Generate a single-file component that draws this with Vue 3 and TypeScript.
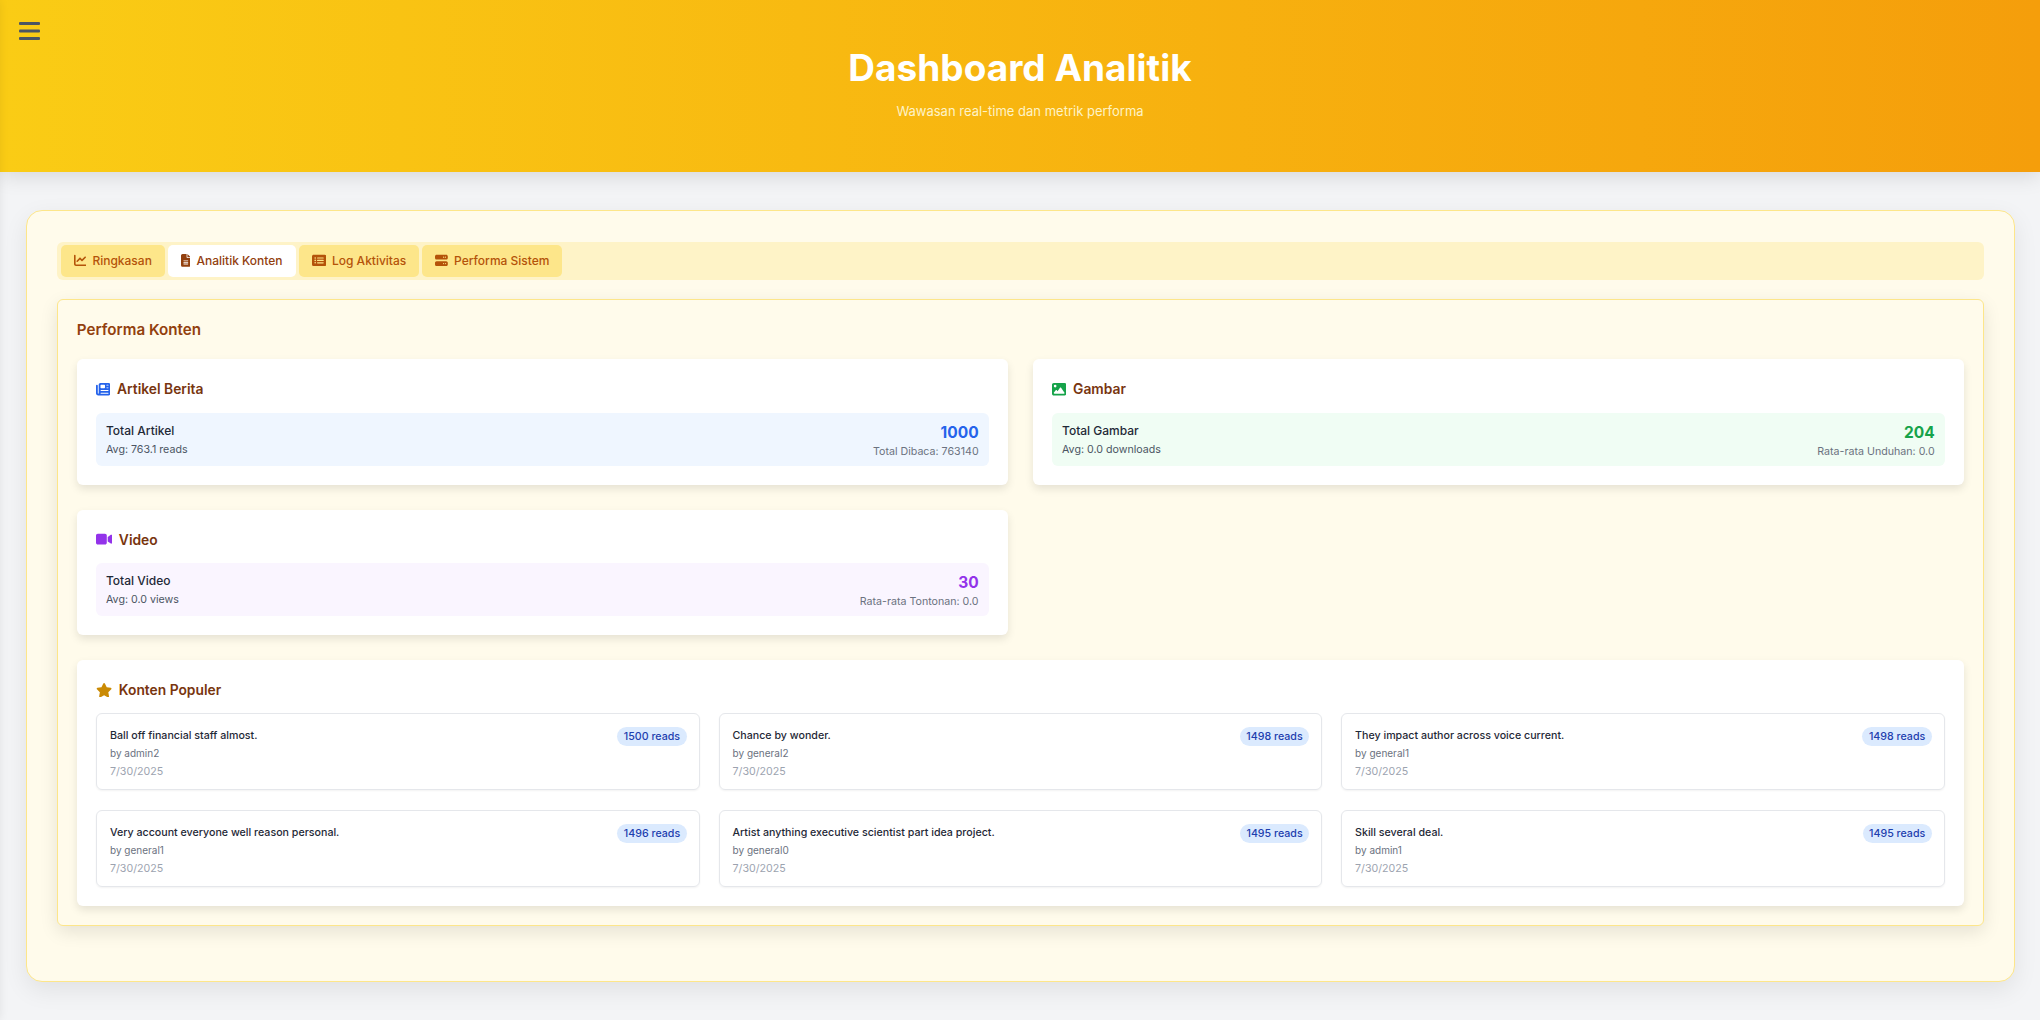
<script setup lang="ts">
interface Tab {
  label: string;
  icon: string;
  active?: boolean;
}

interface Stat {
  title: string;
  icon: string;
  tone: string;
  label: string;
  sub: string;
  value: number;
  note: string;
}

interface Popular {
  title: string;
  author: string;
  date: string;
  reads: number;
}

const tabs: Tab[] = [
  { label: "Ringkasan", icon: "chart" },
  { label: "Analitik Konten", icon: "file", active: true },
  { label: "Log Aktivitas", icon: "list" },
  { label: "Performa Sistem", icon: "server" },
];

const stats: Stat[] = [
  { title: "Artikel Berita", icon: "news", tone: "blue", label: "Total Artikel", sub: "Avg: 763.1 reads", value: 1000, note: "Total Dibaca: 763140" },
  { title: "Gambar", icon: "image", tone: "green", label: "Total Gambar", sub: "Avg: 0.0 downloads", value: 204, note: "Rata-rata Unduhan: 0.0" },
  { title: "Video", icon: "video", tone: "purple", label: "Total Video", sub: "Avg: 0.0 views", value: 30, note: "Rata-rata Tontonan: 0.0" },
];

const popular: Popular[] = [
  { title: "Ball off financial staff almost.", author: "admin2", date: "7/30/2025", reads: 1500 },
  { title: "Chance by wonder.", author: "general2", date: "7/30/2025", reads: 1498 },
  { title: "They impact author across voice current.", author: "general1", date: "7/30/2025", reads: 1498 },
  { title: "Very account everyone well reason personal.", author: "general1", date: "7/30/2025", reads: 1496 },
  { title: "Artist anything executive scientist part idea project.", author: "general0", date: "7/30/2025", reads: 1495 },
  { title: "Skill several deal.", author: "admin1", date: "7/30/2025", reads: 1495 },
];
</script>

<template>
  <div class="page">
    <div class="edge-shadow"></div>
    <header class="hero">
      <button class="menu" aria-label="Menu">
        <svg viewBox="0 0 21 18" width="21" height="18">
          <rect x="0" y="0" width="21" height="3" rx="1" />
          <rect x="0" y="7.5" width="21" height="3" rx="1" />
          <rect x="0" y="15" width="21" height="3" rx="1" />
        </svg>
      </button>
      <h1>Dashboard Analitik</h1>
      <p>Wawasan real-time dan metrik performa</p>
    </header>

    <main class="shell">
      <nav class="tabs">
        <button v-for="tab in tabs" :key="tab.label" class="tab" :class="{ active: tab.active }">
          <svg v-if="tab.icon === 'chart'" class="tab-icon" viewBox="0 0 512 512">
            <path d="M64 64c0-17.700-14.300-32-32-32S0 46.300 0 64V400c0 44.200 35.800 80 80 80H480c17.700 0 32-14.300 32-32s-14.300-32-32-32H80c-8.800 0-16-7.200-16-16V64zm406.600 86.600c12.500-12.500 12.500-32.800 0-45.300s-32.800-12.500-45.300 0L320 210.700l-57.400-57.400c-12.500-12.500-32.800-12.500-45.300 0l-112 112c-12.500 12.500-12.500 32.800 0 45.300s32.800 12.500 45.300 0L240 221.300l57.400 57.400c12.500 12.500 32.800 12.500 45.300 0l128-128z" />
          </svg>
          <svg v-else-if="tab.icon === 'file'" class="tab-icon" viewBox="0 0 384 512">
            <path d="M64 0C28.700 0 0 28.700 0 64V448c0 35.300 28.700 64 64 64H320c35.300 0 64-28.700 64-64V160H256c-17.700 0-32-14.300-32-32V0H64zM256 0V128H384L256 0zM112 256H272c8.800 0 16 7.200 16 16s-7.200 16-16 16H112c-8.800 0-16-7.200-16-16s7.200-16 16-16zm0 64H272c8.800 0 16 7.200 16 16s-7.200 16-16 16H112c-8.800 0-16-7.200-16-16s7.200-16 16-16zm0 64H272c8.800 0 16 7.200 16 16s-7.200 16-16 16H112c-8.800 0-16-7.200-16-16s7.200-16 16-16z" />
          </svg>
          <svg v-else-if="tab.icon === 'list'" class="tab-icon" viewBox="0 0 576 512">
            <path d="M0 96C0 60.700 28.700 32 64 32H512c35.300 0 64 28.700 64 64V416c0 35.300-28.700 64-64 64H64c-35.300 0-64-28.700-64-64V96zM128 288a32 32 0 1 0 0-64 32 32 0 1 0 0 64zm32-128a32 32 0 1 0 -64 0 32 32 0 1 0 64 0zM128 384a32 32 0 1 0 0-64 32 32 0 1 0 0 64zm96-248c-13.300 0-24 10.700-24 24s10.700 24 24 24H448c13.300 0 24-10.700 24-24s-10.700-24-24-24H224zm0 96c-13.300 0-24 10.700-24 24s10.700 24 24 24H448c13.300 0 24-10.700 24-24s-10.700-24-24-24H224zm0 96c-13.300 0-24 10.700-24 24s10.700 24 24 24H448c13.300 0 24-10.700 24-24s-10.700-24-24-24H224z" />
          </svg>
          <svg v-else class="tab-icon" viewBox="0 0 512 512">
            <path d="M64 32C28.700 32 0 60.700 0 96v64c0 35.300 28.700 64 64 64H448c35.300 0 64-28.700 64-64V96c0-35.300-28.700-64-64-64H64zm280 72a24 24 0 1 1 0 48 24 24 0 1 1 0-48zm48 24a24 24 0 1 1 48 0 24 24 0 1 1 -48 0zM64 288c-35.300 0-64 28.700-64 64v64c0 35.300 28.700 64 64 64H448c35.300 0 64-28.700 64-64V352c0-35.300-28.700-64-64-64H64zm280 72a24 24 0 1 1 0 48 24 24 0 1 1 0-48zm56 24a24 24 0 1 1 48 0 24 24 0 1 1 -48 0z" />
          </svg>
          {{ tab.label }}
        </button>
      </nav>

      <section class="panel">
        <h2>Performa Konten</h2>

        <div class="stat-grid">
          <article v-for="stat in stats" :key="stat.title" class="card">
            <h3>
              <svg v-if="stat.icon === 'news'" class="head-icon blue" viewBox="0 0 512 512">
                <path d="M96 96c0-35.300 28.700-64 64-64H448c35.300 0 64 28.700 64 64V416c0 35.300-28.700 64-64 64H80c-44.200 0-80-35.800-80-80V128c0-17.700 14.300-32 32-32s32 14.300 32 32V400c0 8.800 7.200 16 16 16s16-7.200 16-16V96zm64 24v80c0 13.300 10.700 24 24 24H296c13.300 0 24-10.700 24-24V120c0-13.300-10.700-24-24-24H184c-13.300 0-24 10.700-24 24zm208-8c0 8.800 7.200 16 16 16h48c8.800 0 16-7.200 16-16s-7.200-16-16-16H384c-8.800 0-16 7.200-16 16zm0 96c0 8.800 7.200 16 16 16h48c8.800 0 16-7.200 16-16s-7.200-16-16-16H384c-8.800 0-16 7.200-16 16zM160 304c0 8.800 7.200 16 16 16H432c8.800 0 16-7.200 16-16s-7.200-16-16-16H176c-8.800 0-16 7.200-16 16zm0 96c0 8.800 7.200 16 16 16H432c8.800 0 16-7.200 16-16s-7.200-16-16-16H176c-8.800 0-16 7.200-16 16z" />
              </svg>
              <svg v-else-if="stat.icon === 'image'" class="head-icon green" viewBox="0 0 512 512">
                <path d="M0 96C0 60.700 28.700 32 64 32H448c35.300 0 64 28.700 64 64V416c0 35.300-28.700 64-64 64H64c-35.300 0-64-28.700-64-64V96zM323.800 202.500c-4.500-6.600-11.900-10.500-19.800-10.500s-15.400 3.900-19.800 10.500l-87 127.600L170.700 297c-4.600-5.700-11.500-9-18.700-9s-14.200 3.300-18.700 9l-64 80c-5.800 7.200-6.900 17.100-2.900 25.400s12.400 13.600 21.600 13.600h96 32H424c8.900 0 17.100-4.900 21.200-12.800s3.600-17.400-1.400-24.700l-120-176zM112 192a48 48 0 1 0 0-96 48 48 0 1 0 0 96z" />
              </svg>
              <svg v-else class="head-icon purple" viewBox="0 0 576 512">
                <path d="M0 128C0 92.700 28.700 64 64 64H320c35.300 0 64 28.700 64 64V384c0 35.300-28.700 64-64 64H64c-35.300 0-64-28.700-64-64V128zM559.100 99.800c10.400 5.600 16.900 16.400 16.900 28.200V384c0 11.800-6.500 22.600-16.900 28.200s-23 5-32.900-1.600l-96-64L416 337.100V320 192 174.900l14.200-9.500 96-64c9.800-6.500 22.400-7.200 32.900-1.600z" />
              </svg>
              {{ stat.title }}
            </h3>
            <div class="stat-row" :class="stat.tone">
              <div class="stat-left">
                <div class="stat-label">{{ stat.label }}</div>
                <div class="stat-sub">{{ stat.sub }}</div>
              </div>
              <div class="stat-right">
                <div class="stat-value">{{ stat.value }}</div>
                <div class="stat-note">{{ stat.note }}</div>
              </div>
            </div>
          </article>
        </div>

        <article class="card popular">
          <h3>
            <svg class="head-icon amber" viewBox="0 0 576 512">
              <path d="M316.900 18C311.600 7 300.400 0 288.100 0s-23.400 7-28.800 18L195 150.300 51.400 171.500c-12 1.800-22 10.200-25.700 21.700s-.7 24.200 7.900 32.700L137.800 329 113.200 474.700c-2 12 3 24.200 12.900 31.300s23 8 33.800 2.300l128.300-68.500 128.300 68.500c10.800 5.700 23.900 4.900 33.800-2.300s14.900-19.300 12.900-31.300L438.500 329 542.700 225.900c8.600-8.500 11.700-21.200 7.900-32.700s-13.700-19.900-25.700-21.700L381.200 150.300 316.900 18z" />
            </svg>
            Konten Populer
          </h3>
          <div class="popular-grid">
            <div v-for="item in popular" :key="item.title" class="item">
              <div class="item-body">
                <div class="item-title">{{ item.title }}</div>
                <div class="item-author">by {{ item.author }}</div>
                <div class="item-date">{{ item.date }}</div>
              </div>
              <span class="badge">{{ item.reads }} reads</span>
            </div>
          </div>
        </article>
      </section>
    </main>
  </div>
</template>

<style>
html,
body {
  margin: 0;
  background: #f3f4f6;
}
</style>

<style scoped>
.page {
  position: relative;
  min-height: 1020px;
  overflow: hidden;
  background: #f3f4f6;
  font-family: Inter, "Noto Sans", sans-serif;
  color: #111827;
}

/* sidebar tertutup di luar layar, cuma bayangannya yang kelihatan */
.edge-shadow {
  position: absolute;
  top: 0;
  left: -20px;
  bottom: 0;
  width: 20px;
  box-shadow: 0 0 10px rgba(0, 0, 0, 0.08);
  z-index: 5;
}

.hero {
  position: relative;
  height: 172px;
  box-sizing: border-box;
  padding-top: 46px;
  text-align: center;
  background: linear-gradient(90deg, #facc15, #f59e0b);
  box-shadow: 0 4px 20px rgba(0, 0, 0, 0.12);
}

.menu {
  position: absolute;
  top: 22px;
  left: 19px;
  padding: 0;
  border: 0;
  background: none;
  line-height: 0;
}

.menu svg {
  fill: #4b5563;
}

.hero h1 {
  margin: 0;
  font-size: 37px;
  line-height: 44px;
  font-weight: 700;
  color: #fff;
}

.hero p {
  margin: 11px 0 0;
  font-size: 13px;
  line-height: 20px;
  color: #fef3c7;
}

.shell {
  margin: 38px 25px 0 25.6px;
  padding: 31px 30px 55px;
  background: #fffbeb;
  border: 1px solid #fde68a;
  border-radius: 16px;
  box-shadow: 0 8px 24px rgba(0, 0, 0, 0.08);
}

.tabs {
  display: flex;
  gap: 3px;
  padding: 3px 4px;
  background: #fef3c7;
  border-radius: 6px;
}

.tab {
  display: flex;
  align-items: center;
  gap: 6px;
  height: 32px;
  padding: 0 13px 1px;
  border: 0;
  border-radius: 5px;
  background: #fde68a;
  color: #b45309;
  font-family: inherit;
  font-size: 12px;
  font-weight: 500;
}

.tab.active {
  background: #fff;
  color: #92400e;
}

.tab-icon {
  height: 12.8px;
  fill: currentColor;
}

.panel {
  margin-top: 19px;
  padding: 19px 19.2px;
  background: #fffbeb;
  border: 1px solid #fde68a;
  border-radius: 6px;
  box-shadow: 0 6px 18px rgba(0, 0, 0, 0.1);
}

.panel h2 {
  margin: 0 0 19px;
  font-size: 15.2px;
  line-height: 21px;
  font-weight: 600;
  color: #92400e;
}

.stat-grid {
  display: grid;
  grid-template-columns: 1fr 1fr;
  gap: 25px;
}

.card {
  padding: 19px 19.2px;
  background: #fff;
  border-radius: 6px;
  box-shadow: 0 4px 8px rgba(0, 0, 0, 0.1);
}

.card h3 {
  display: flex;
  align-items: center;
  gap: 6.7px;
  height: 19px;
  margin: 0 0 15.6px;
  padding-top: 3px;
  box-sizing: border-box;
  font-size: 13.8px;
  font-weight: 600;
  color: #78350f;
}

.popular h3 {
  margin-bottom: 15px;
}

.head-icon {
  height: 14.4px;
  fill: currentColor;
}

.blue { color: #2563eb; }
.green { color: #16a34a; }
.purple { color: #9333ea; }
.amber { color: #ca8a04; }

.stat-row {
  display: flex;
  justify-content: space-between;
  align-items: center;
  height: 53px;
  padding: 0 10px;
  border-radius: 6px;
}

.stat-row.blue { background: #eff6ff; }
.stat-row.green { background: #f0fdf4; }
.stat-row.purple { background: #faf5ff; }

.stat-left {
  padding-top: 1px;
}

.stat-label {
  font-size: 12px;
  line-height: 18px;
  font-weight: 500;
  color: #1f2937;
}

.stat-sub {
  margin-top: 2px;
  font-size: 10.67px;
  line-height: 16px;
  color: #4b5563;
}

.stat-right {
  padding-top: 3px;
  text-align: right;
}

.stat-note {
  font-size: 10.67px;
  line-height: 16px;
  color: #6b7280;
}

.stat-value {
  font-size: 15.5px;
  line-height: 22px;
  font-weight: 700;
}

.stat-row.blue .stat-value { color: #2563eb; }
.stat-row.green .stat-value { color: #16a34a; }
.stat-row.purple .stat-value { color: #9333ea; }

.popular {
  margin-top: 25px;
}

.popular-grid {
  display: grid;
  grid-template-columns: repeat(3, 1fr);
  gap: 20px 19px;
}

.item {
  display: flex;
  justify-content: space-between;
  align-items: flex-start;
  height: 77px;
  box-sizing: border-box;
  padding: 11px 13px;
  border: 1px solid #e5e7eb;
  border-radius: 6px;
  box-shadow: 0 1px 2px rgba(0, 0, 0, 0.05);
}

.item-title {
  margin-top: 3px;
  font-size: 10.67px;
  line-height: 16px;
  font-weight: 500;
  color: #1f2937;
}

.item-author {
  margin-top: 1px;
  font-size: 10px;
  line-height: 16px;
  color: #6b7280;
}

.item-date {
  margin-top: 3px;
  font-size: 10.67px;
  line-height: 16px;
  color: #9ca3af;
}

.badge {
  margin: 2px -1px 0 0;
  padding: 2.5px 6.4px;
  border-radius: 10px;
  background: #dbeafe;
  color: #1e40af;
  font-size: 10.67px;
  line-height: 14px;
  font-weight: 500;
}
</style>
